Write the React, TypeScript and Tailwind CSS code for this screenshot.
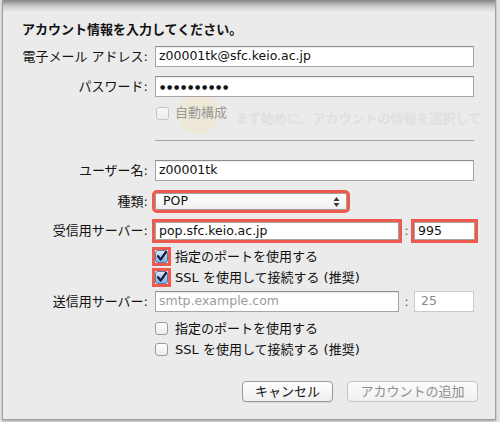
import React from 'react';

const RED = 'outline-3 outline-[#ee5a4d]';

function Label({ children }: { children: React.ReactNode }) {
  return (
    <div className="w-[145px] shrink-0 text-right text-[13px] leading-[16px] text-[#111]">
      {children}
    </div>
  );
}

function Field({ children, className = '' }: { children?: React.ReactNode; className?: string }) {
  return (
    <div
      className={`h-[21px] bg-white border border-[#a5a5a5] border-t-[#8e8e8e] pl-[3px] flex items-center text-[12.5px] leading-none shadow-[inset_0_1px_1px_rgba(0,0,0,0.08)] ${className}`}
    >
      {children}
    </div>
  );
}

function CheckBox({ checked, disabled }: { checked?: boolean; disabled?: boolean }) {
  if (checked) {
    return (
      <span className={`w-[13px] h-[13px] shrink-0 flex ${RED}`}>
        <svg width="13" height="13" viewBox="0 0 13 13">
          <defs>
            <linearGradient id="cbFill" x1="0" y1="0" x2="0" y2="1">
              <stop offset="0" stopColor="#dcebfb" />
              <stop offset="0.5" stopColor="#a8caf0" />
              <stop offset="1" stopColor="#7eafe5" />
            </linearGradient>
          </defs>
          <rect x="0.5" y="0.5" width="12" height="12" rx="2.5" fill="url(#cbFill)" stroke="#5c7ca6" />
          <path
            d="M3 6.2 L5.6 9.6 L11 2"
            fill="none"
            stroke="#141a38"
            strokeWidth="2.2"
            strokeLinecap="round"
            strokeLinejoin="round"
          />
        </svg>
      </span>
    );
  }
  return (
    <span
      className={`w-[13px] h-[13px] shrink-0 rounded-[3px] border bg-linear-to-b ${
        disabled ? 'border-[#c6c6c6] from-[#f7f7f7] to-[#eeeeee]' : 'border-[#9a9a9a] from-white to-[#ececec]'
      }`}
    />
  );
}

function CheckRow({ checked, children, className = '' }: { checked?: boolean; children: React.ReactNode; className?: string }) {
  return (
    <div className={`h-[17px] ml-[152px] flex items-center gap-[7px] text-[13px] leading-[16px] text-[#111] ${className}`}>
      <CheckBox checked={checked} />
      <span>{children}</span>
    </div>
  );
}

// faint content of the window behind the sheet
function Ghost() {
  return (
    <div className="absolute inset-0 z-0 pointer-events-none text-[#e0e0e0]">
      <div className="absolute left-[174px] top-[92px] w-[42px] h-[42px] rounded-full bg-[#ede8d8]" />
      <div className="absolute left-[232px] top-[109px] whitespace-nowrap text-[13px] font-bold">
        まず始めに、アカウントの情報を選択して
      </div>
    </div>
  );
}

export default function App() {
  return (
    <div className="w-[500px] h-[422px] bg-[#e4e4e4] overflow-hidden font-['DejaVu_Sans','Noto_Sans_CJK_JP',sans-serif] text-[#111]">
      <div className="relative ml-[2px] w-[494px] h-[420px] bg-[#ebebeb] border-x border-b border-[#a0a0a0] shadow-[0_1px_2px_rgba(0,0,0,0.3)]">
        <Ghost />
        <div className="relative z-10 flex flex-col">
          {/* top shadow of the sheet */}
          <div className="h-[12px] bg-linear-to-b from-[#858585] via-[#cbcbcb] to-[#ebebeb]" />

          <div className="mt-[10px] h-[16px] pl-[19px] text-[13px] leading-[16px] font-bold">
            アカウント情報を入力してください。
          </div>

          <div className="mt-[8px] flex items-center gap-[7px]">
            <Label>電子メール アドレス:</Label>
            <Field className="w-[319px]">z00001tk@sfc.keio.ac.jp</Field>
          </div>

          <div className="mt-[9px] flex items-center gap-[7px]">
            <Label>パスワード:</Label>
            <Field className="w-[319px] pl-[3px]">
              {Array.from({ length: 10 }).map((_, i) => (
                <span key={i} className="w-[7px] text-center text-[6px] leading-none">
                  ●
                </span>
              ))}
            </Field>
          </div>

          <div className="mt-[8px] h-[16px] ml-[153px] flex items-center gap-[6px] text-[13px] leading-[16px] text-[#9a9a9a]">
            <CheckBox disabled />
            <span>自動構成</span>
          </div>

          <div className="mt-[19px] ml-[152px] w-[319px] h-px bg-[#a3a3a3]" />

          <div className="mt-[19px] flex items-center gap-[7px]">
            <Label>ユーザー名:</Label>
            <Field className="w-[319px]">z00001tk</Field>
          </div>

          <div className="mt-[9px] h-[23px] flex items-center gap-[7px]">
            <Label>種類:</Label>
            <div
              className={`w-[192px] h-[17px] rounded-[2px] border border-[#a0a0a0] bg-linear-to-b from-white to-[#efefef] flex items-center justify-between pl-[7px] pr-[6px] text-[12.5px] leading-none ${RED}`}
            >
              <span>POP</span>
              <svg width="7" height="12" viewBox="0 0 7 12">
                <path d="M3.5 1 L6.5 5 H0.5 Z M3.5 11 L6.5 7 H0.5 Z" fill="#3a3a3a" />
              </svg>
            </div>
          </div>

          <div className="mt-[6px] h-[24px] flex items-center gap-[7px]">
            <Label>受信用サーバー:</Label>
            <div className="flex items-center">
              <div
                className={`w-[244px] h-[18px] bg-white border border-[#a5a5a5] pl-[3px] flex items-center text-[12.5px] leading-none ${RED}`}
              >
                pop.sfc.keio.ac.jp
              </div>
              <div className="w-[15px] text-center text-[12px] text-[#555]">:</div>
              <div
                className={`w-[61px] h-[18px] bg-white border border-[#a5a5a5] pl-[3px] flex items-center text-[12.5px] leading-none ${RED}`}
              >
                995
              </div>
            </div>
          </div>

          <CheckRow checked className="mt-[5px]">指定のポートを使用する</CheckRow>
          <CheckRow checked className="mt-[4px]">SSL を使用して接続する (推奨)</CheckRow>

          <div className="mt-[5px] flex items-center gap-[7px]">
            <Label>送信用サーバー:</Label>
            <div className="flex items-center">
              <Field className="w-[244px] text-[#9c9c9c]">smtp.example.com</Field>
              <div className="w-[15px] text-center text-[12px] text-[#555]">:</div>
              <div className="w-[60px] h-[21px] bg-white border border-[#cacaca] pl-[6px] flex items-center text-[12.5px] leading-none text-[#8a8a8a]">
                25
              </div>
            </div>
          </div>

          <CheckRow className="mt-[8px]">指定のポートを使用する</CheckRow>
          <CheckRow className="mt-[4px]">SSL を使用して接続する (推奨)</CheckRow>

          <div className="mt-[23px] flex justify-end gap-[14px] pr-[17px]">
            <div className="w-[91px] h-[21px] rounded-[4px] border border-[#9a9a9a] bg-linear-to-b from-white to-[#efefef] shadow-[0_1px_0_rgba(0,0,0,0.08)] flex items-center justify-center text-[13px] leading-none text-[#111]">
              キャンセル
            </div>
            <div className="w-[131px] h-[21px] rounded-[4px] border border-[#c4c4c4] bg-linear-to-b from-[#fbfbfb] to-[#f1f1f1] flex items-center justify-center text-[13px] leading-none text-[#8e8e8e]">
              アカウントの追加
            </div>
          </div>
        </div>
      </div>
    </div>
  );
}
